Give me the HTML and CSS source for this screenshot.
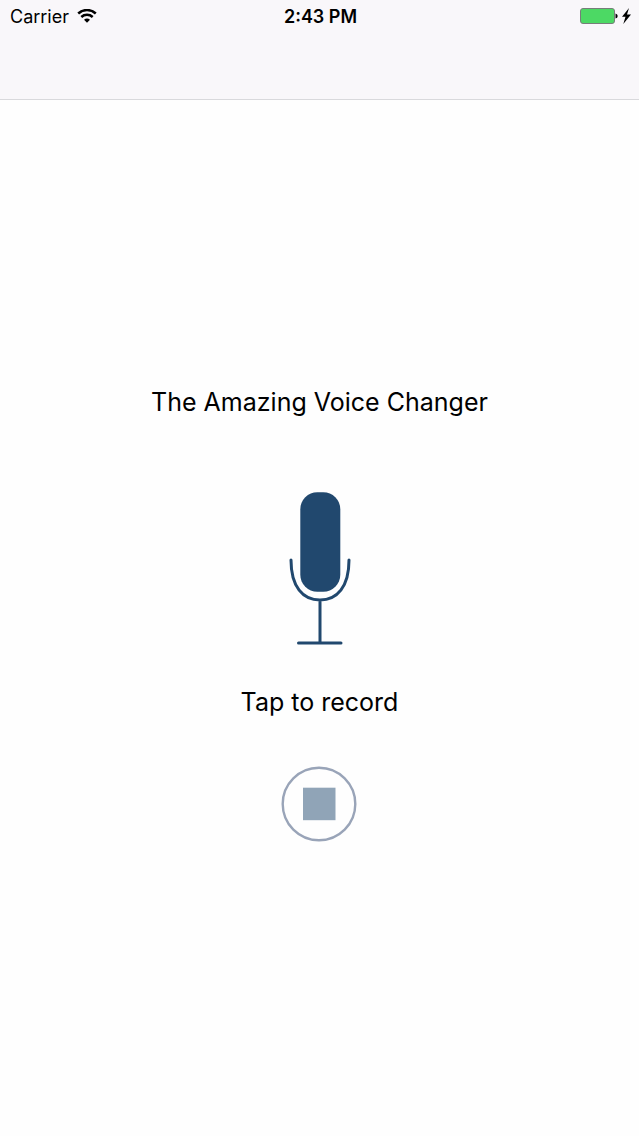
FILE: index.html
```
<!DOCTYPE html>
<html lang="en">
<head>
<meta charset="UTF-8">
<meta name="viewport" content="width=device-width, initial-scale=1">
<title>The Amazing Voice Changer</title>
<link rel="stylesheet" href="styles.css">
</head>
<body>
	<header class="navBar">
		<div class="statusBar">
			<div class="carrier">
				<span>Carrier</span>
				<svg class="wifiIcon" width="20" height="14" viewBox="0 0 20 14">
					<path d="M1.200 4.500C6.200 -.1 13.800 -.1 18.800 4.500M4.300 8C7.600 5.100 12.400 5.100 15.700 8" fill="none" stroke="#000" stroke-width="2.500"/>
					<path d="M7 10.800Q10 8.200 13 10.800L10 13.800Z"/>
				</svg>
			</div>
			<div class="clock">2:43 PM</div>
			<div class="battery">
				<svg width="52" height="18" viewBox="0 0 52 18">
					<rect x="1.500" y="1.500" width="34" height="15" rx="2.500" fill="#4cd964" stroke="#777d79"/>
					<path d="M36.500 6.500Q38.700 7 38.700 9T36.500 11.500Z"/>
					<path d="M50 1L43 9.800H46.500L44.300 17L52 7.400H48Z"/>
				</svg>
			</div>
		</div>
	</header>
	<main class="container">
		<h1>The Amazing Voice Changer</h1>
		<button type="button" class="recordButton" id="recordButton" aria-labelledby="recordLabel">
			<svg width="63" height="156" viewBox="0 0 63 156">
				<rect x="12.300" y="2.300" width="40" height="99.500" rx="17" fill="#21486e"/>
				<path d="M3 70C3 97 15 110 32 110S61 97 61 70M32 110V153M10.500 153H53" fill="none" stroke="#21486e" stroke-width="3" stroke-linecap="round"/>
			</svg>
		</button>
		<label id="recordLabel" for="recordButton">Tap to record</label>
		<button type="button" class="stopButton" aria-label="Stop">
			<svg width="77" height="76" viewBox="0 0 77 76">
				<circle cx="38" cy="38" r="36.300" fill="none" stroke="#99a4b8" stroke-width="2.400"/>
				<rect x="22" y="21.700" width="32.500" height="32.500" fill="#90a4b7"/>
			</svg>
		</button>
	</main>
</body>
</html>
```

FILE: styles.css
```
* {
	box-sizing: border-box;
}

body {
	display: flex;
	flex-direction: column;
	min-height: 100vh;
	margin: 0;
	color: #000;
	background: #fefefe;
	font-family: Inter, "Liberation Sans", sans-serif;
}

svg {
	display: block;
}

.navBar {
	height: 100px;
	background: #f9f7fa;
	border-bottom: 1px solid #d9d9dc;
}

.statusBar {
	display: grid;
	grid-template-columns: 1fr auto 1fr;
	align-items: center;
	height: 32px;
	padding: 0 8px 0 10px;
	font-size: 18px;
}

.carrier {
	display: flex;
	align-items: center;
	gap: 8px;
}

.clock {
	font-weight: 600;
}

.battery {
	justify-self: end;
}

.container {
	display: flex;
	flex: 1;
	flex-direction: column;
	align-items: center;
	justify-content: center;
	padding-bottom: 8px;
}

h1,
label {
	margin: 0;
	font-size: 25px;
	font-weight: 400;
	line-height: 32px;
}

button {
	padding: 0;
	border: none;
	background: none;
	cursor: pointer;
}

.recordButton {
	margin: 72px 0 40px;
}

.stopButton {
	margin-top: 48px;
	border-radius: 50%;
}
```
